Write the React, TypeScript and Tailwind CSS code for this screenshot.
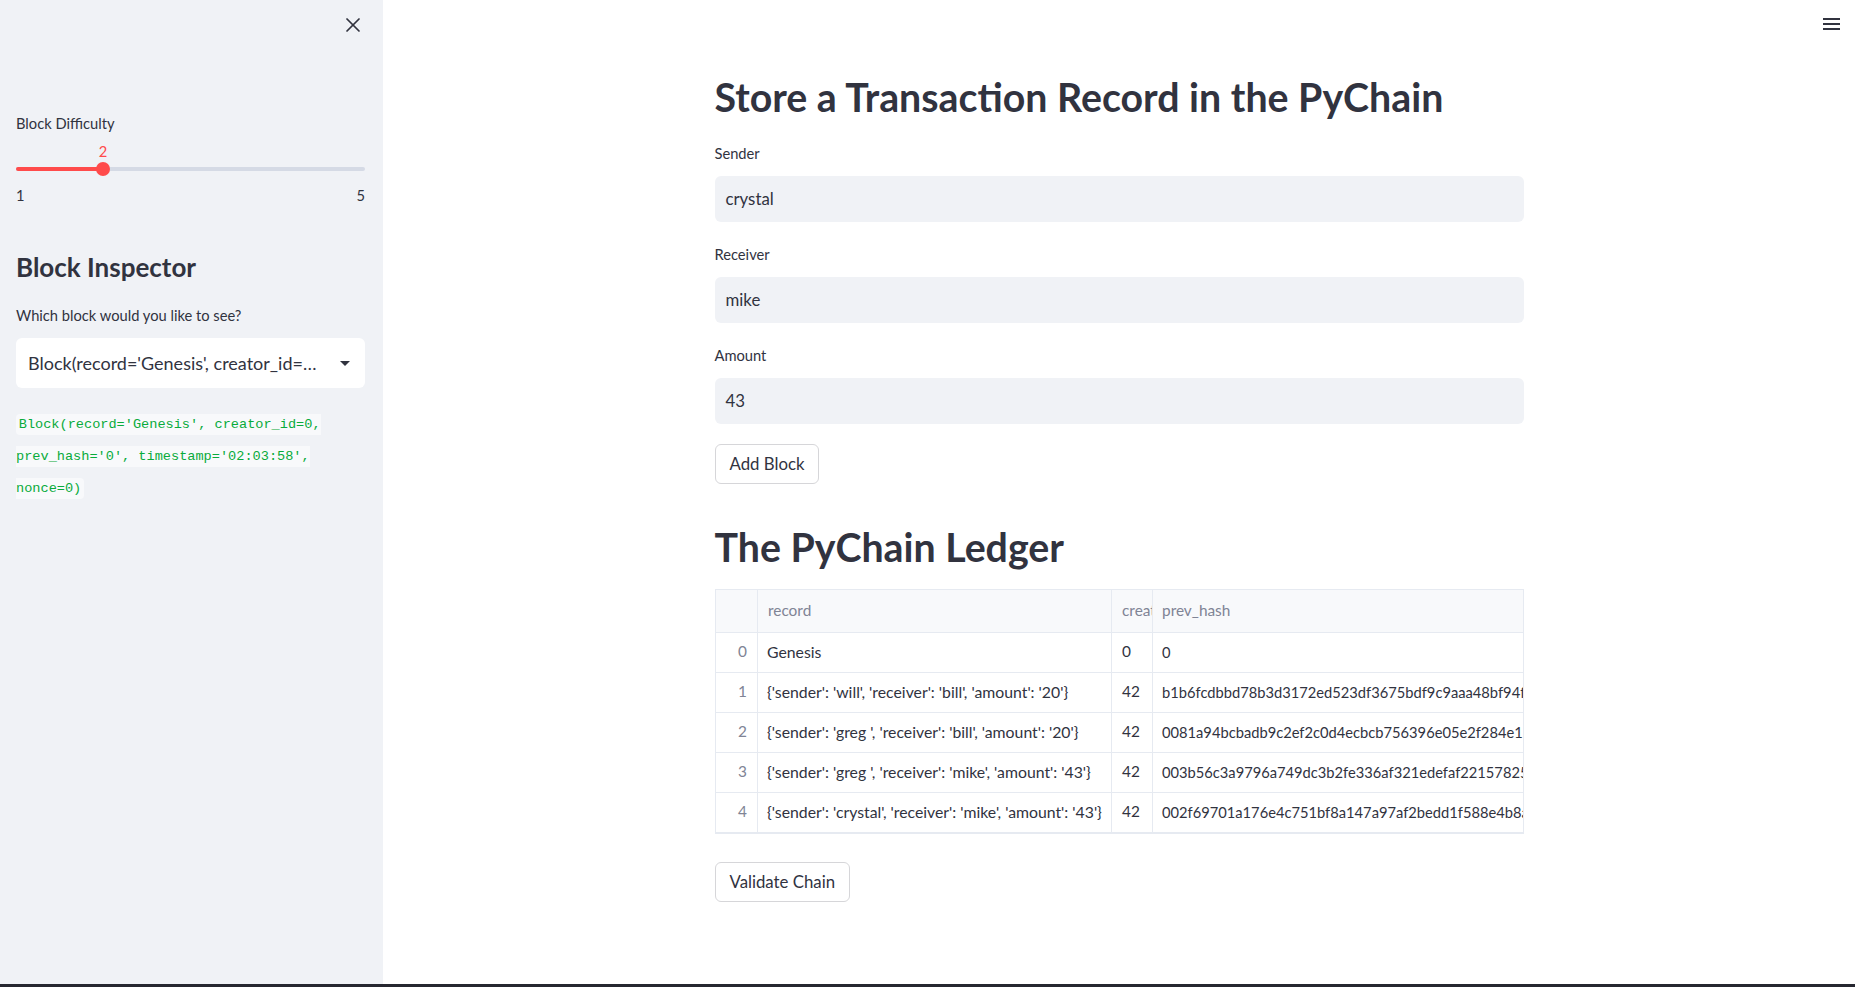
import { X } from "lucide-react";

const rows = [
  {
    idx: 0,
    record: "Genesis",
    creator: "0",
    prev: "0",
  },
  {
    idx: 1,
    record: "{'sender': 'will', 'receiver': 'bill', 'amount': '20'}",
    creator: "42",
    prev: "b1b6fcdbbd78b3d3172ed523df3675bdf9c9aaa48bf94f3e1c0d7a6b52e9f8a4",
  },
  {
    idx: 2,
    record: "{'sender': 'greg ', 'receiver': 'bill', 'amount': '20'}",
    creator: "42",
    prev: "0081a94bcbadb9c2ef2c0d4ecbcb756396e05e2f284e12a7d93b0c5f81e64a2d",
  },
  {
    idx: 3,
    record: "{'sender': 'greg ', 'receiver': 'mike', 'amount': '43'}",
    creator: "42",
    prev: "003b56c3a9796a749dc3b2fe336af321edefaf2215782589c0e4d1b7a3f65e20",
  },
  {
    idx: 4,
    record: "{'sender': 'crystal', 'receiver': 'mike', 'amount': '43'}",
    creator: "42",
    prev: "002f69701a176e4c751bf8a147a97af2bedd1f588e4b8a4c9e2d0f5b7136a8e1",
  },
];

function Field({ label, value }: { label: string; value: string }) {
  return (
    <div className="mt-[22px]">
      <div className="h-5 text-[14.7px] leading-5">{label}</div>
      <div className="mt-[13px] flex h-[46px] items-center rounded-md bg-[#f0f2f6] px-[11px] text-[16.8px]">
        {value}
      </div>
    </div>
  );
}

function Sidebar() {
  return (
    <aside className="w-[383px] shrink-0 bg-[#f0f2f6] pl-4 pr-[18px]">
      <div className="flex h-[50px] items-center justify-end">
        <X size={24} strokeWidth={1.7} className="text-[#31333f]" />
      </div>

      <div className="mt-[63px] h-5 text-[14.7px] leading-5">Block Difficulty</div>
      <div className="relative mt-2 h-5">
        <span className="absolute left-[87px] -translate-x-1/2 text-[14.7px] leading-5 text-[#ff4b4b]">2</span>
      </div>
      <div className="relative mt-[1px] flex h-[14px] items-center">
        <div className="h-1 w-full rounded-full bg-[#d5dae5]">
          <div className="h-1 w-1/4 rounded-full bg-[#ff4b4b]" />
        </div>
        <div className="absolute left-1/4 top-0 h-[14px] w-[14px] -translate-x-1/2 rounded-full bg-[#ff4b4b]" />
      </div>
      <div className="mt-[9px] flex h-5 justify-between text-[14.7px] leading-5">
        <span>1</span>
        <span>5</span>
      </div>

      <h2 className="mt-[46px] text-[26px] font-bold leading-8">Block Inspector</h2>
      <div className="mt-[22px] h-5 text-[14.7px] leading-5">Which block would you like to see?</div>
      <div className="mt-[13px] flex h-[50px] items-center justify-between rounded-md bg-white pl-3 pr-[15px] text-[18px]">
        <span className="truncate">Block(record='Genesis', creator_id=…</span>
        <svg width="10" height="5" viewBox="0 0 10 5" className="ml-3 shrink-0">
          <path d="M0 0h10L5 5z" fill="#31333f" />
        </svg>
      </div>

      <div className="mt-[19px] leading-[29px]">
        <code className="rounded bg-[#f8f9fb] px-[0.2em] py-[3px] font-['Liberation_Mono',monospace] text-[13.6px] text-[#09ab3b]">
          Block(record='Genesis', creator_id=0, prev_hash='0', timestamp='02:03:58', nonce=0)
        </code>
      </div>
    </aside>
  );
}

function Ledger() {
  return (
    <div className="mt-[18px] w-[809px] overflow-hidden border border-[#e6eaf1]">
      <table className="w-[1150px] table-fixed border-collapse text-[15.4px]">
        <colgroup>
          <col className="w-[42px]" />
          <col className="w-[354px]" />
          <col className="w-[41px]" />
          <col className="w-[713px]" />
        </colgroup>
        <thead>
          <tr className="h-[42px] bg-[#f8f9fb] text-[#808495]">
            <th className="border-r border-b border-[#e6eaf1] font-normal" />
            <th className="border-r border-b border-[#e6eaf1] px-[10px] text-left font-normal">record</th>
            <th className="overflow-hidden whitespace-nowrap border-r border-b border-[#e6eaf1] pl-[10px] text-left font-normal">
              creator_id
            </th>
            <th className="border-b border-[#e6eaf1] px-[9px] text-left font-normal">prev_hash</th>
          </tr>
        </thead>
        <tbody>
          {rows.map((r) => (
            <tr key={r.idx} className="h-10">
              <td className="border-r border-b border-[#e6eaf1] pr-[10px] text-right text-[#808495]">{r.idx}</td>
              <td className="overflow-hidden whitespace-nowrap border-r border-b border-[#e6eaf1] pl-[9px] text-[15.8px]">
                {r.record}
              </td>
              <td className="border-r border-b border-[#e6eaf1] pl-[10px]">{r.creator}</td>
              <td className="whitespace-nowrap border-b border-[#e6eaf1] px-[9px] text-[14.7px]">{r.prev}</td>
            </tr>
          ))}
        </tbody>
      </table>
    </div>
  );
}

export default function App() {
  return (
    <div className="flex h-screen flex-col font-['Lato',sans-serif] text-[#31333f]">
      <div className="flex min-h-0 flex-1">
        <Sidebar />
        <main className="relative flex-1 bg-white">
          <button className="absolute right-[15px] top-[18px] flex w-[17px] flex-col gap-[3px]">
            <span className="h-[2px] w-full bg-[#31333f]" />
            <span className="h-[2px] w-full bg-[#31333f]" />
            <span className="h-[2px] w-full bg-[#31333f]" />
          </button>

          <div className="mx-auto w-[809px] pt-[73px]">
            <h1 className="text-[39.3px] font-bold leading-[48px]">Store a Transaction Record in the PyChain</h1>
            <Field label="Sender" value="crystal" />
            <Field label="Receiver" value="mike" />
            <Field label="Amount" value="43" />
            <button className="mt-5 h-10 rounded-md border border-[#d6d6d9] bg-white px-[14px] text-[16.8px]">
              Add Block
            </button>

            <h1 className="mt-[39px] text-[39.3px] font-bold leading-[48px]">The PyChain Ledger</h1>
            <Ledger />

            <button className="mt-[28px] h-10 rounded-md border border-[#d6d6d9] bg-white px-[14px] text-[16.8px]">
              Validate Chain
            </button>
          </div>
        </main>
      </div>
      <div className="h-[3px] bg-[#262730]" />
    </div>
  );
}
